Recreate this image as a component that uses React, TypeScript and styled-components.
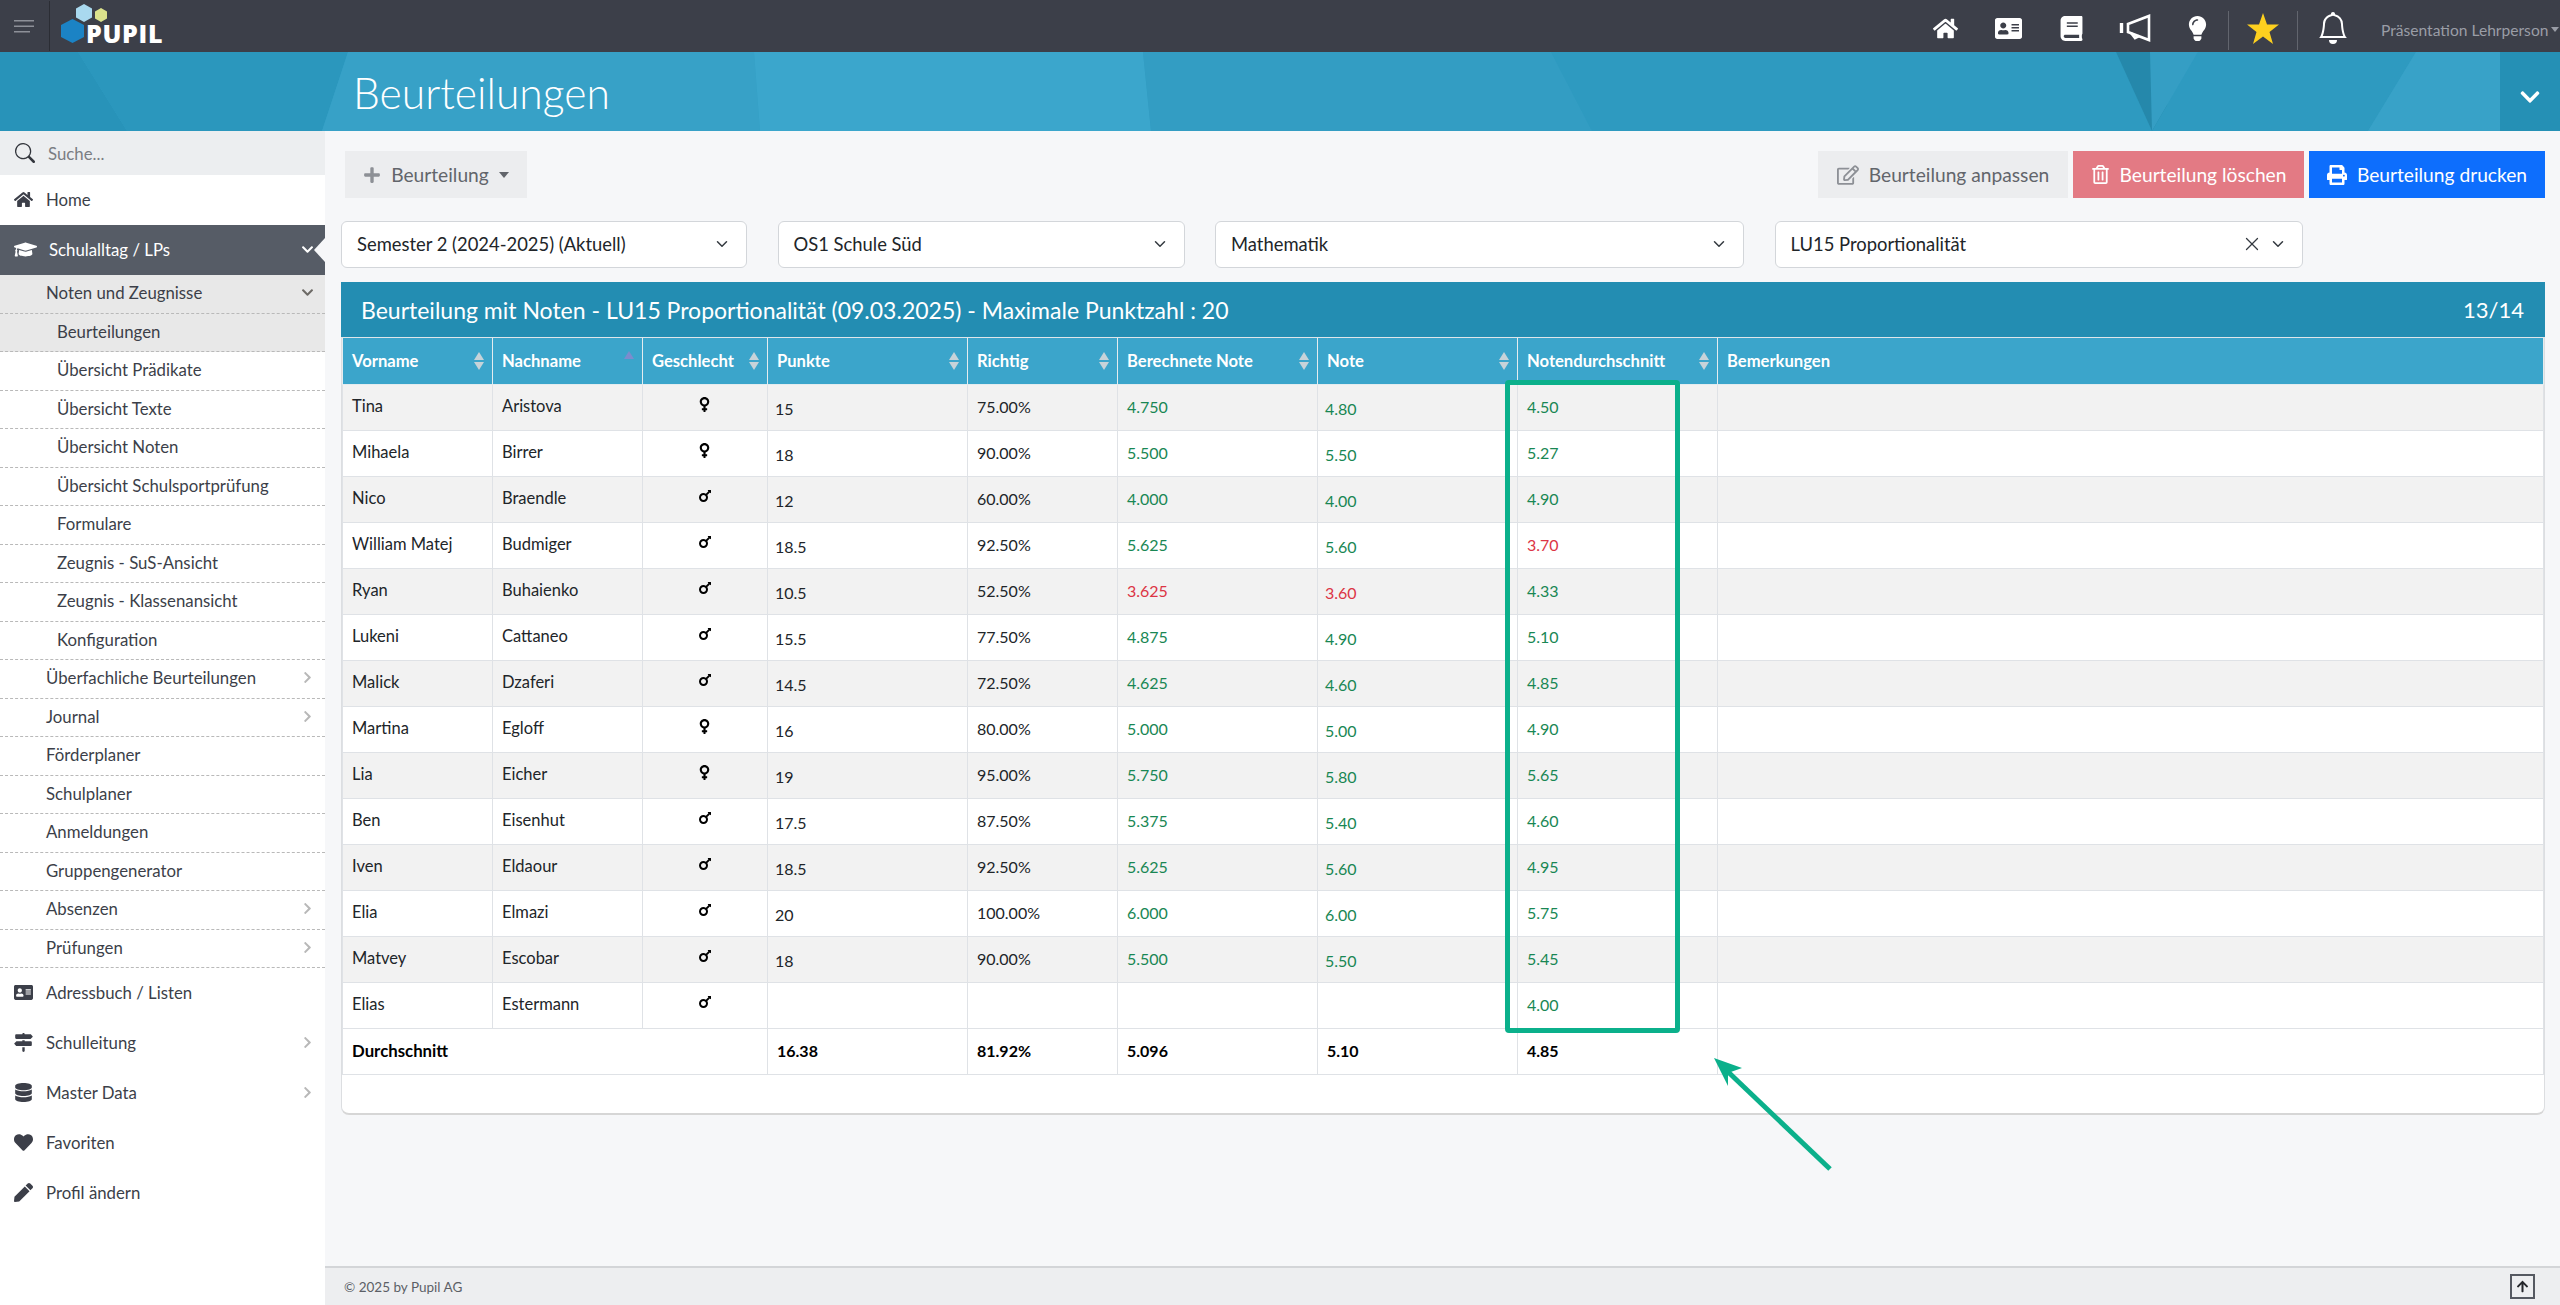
import React from "react";
import styled, { createGlobalStyle } from "styled-components";
import {
  FaHome,
  FaAddressCard,
  FaBook,
  FaLightbulb,
  FaGraduationCap,
  FaDatabase,
  FaHeart,
  FaPen,
  FaPlus,
  FaRegEdit,
  FaRegTrashAlt,
  FaPrint,
  FaVenus,
  FaMars,
  FaChevronDown,
  FaChevronRight,
  FaArrowUp,
} from "react-icons/fa";
import { FaSignsPost } from "react-icons/fa6";
import { BsSearch, BsBell } from "react-icons/bs";
import { ChevronDown, X } from "lucide-react";

const GlobalStyle = createGlobalStyle`
  * { box-sizing: border-box; }
  html, body { margin: 0; padding: 0; }
  body {
    font-family: "Lato", "Noto Sans", sans-serif;
    color: #212529;
    background: #f6f7f9;
  }
`;

const Page = styled.div`
  position: relative;
  width: 2560px;
  height: 1305px;
  display: flex;
  flex-direction: column;
  overflow: hidden;
`;

const TopBar = styled.header`
  height: 52px;
  background: #3c3f49;
  display: flex;
  align-items: center;
  flex-shrink: 0;
`;

const MenuButton = styled.div`
  width: 50px;
  height: 50px;
  border-right: 1px solid #2b2d34;
  display: flex;
  align-items: center;
  justify-content: center;
  padding-right: 2px;
`;

const LogoWrap = styled.div`
  display: flex;
  position: relative;
  width: 120px;
  height: 52px;
  margin-left: 10px;
`;

const LogoText = styled.span`
  position: absolute;
  left: 26px;
  top: 19px;
  font-family: "Open Sans", sans-serif;
  font-weight: 800;
  font-size: 25px;
  line-height: 28px;
  letter-spacing: 0.7px;
  color: #fff;
`;

const TopIcons = styled.nav`
  margin-left: auto;
  display: flex;
  align-items: center;
  height: 100%;
  padding-top: 4px;
`;

const TopIcon = styled.div<{ $size?: number }>`
  width: 63px;
  height: 48px;
  display: flex;
  align-items: center;
  justify-content: center;
  color: #fff;
  font-size: ${(p) => p.$size ?? 24}px;
`;

const StarBox = styled.div`
  width: 70px;
  height: 39px;
  border-left: 1px solid #62656e;
  border-right: 1px solid #62656e;
  display: flex;
  align-items: center;
  justify-content: center;
  margin: 4px 0 0 -1px;
`;

const StarShape = styled.svg`
  margin-top: -4px;
`;

const BellBox = styled.div`
  width: 70px;
  display: flex;
  align-items: center;
  justify-content: center;
  color: #fff;
  font-size: 32px;
`;

const UserMenu = styled.div`
  width: 192px;
  padding: 3px 0 0 13px;
  font-size: 15.6px;
  color: #9a9da6;
  display: flex;
  align-items: center;
  gap: 3px;
  white-space: nowrap;
`;

const Caret = styled.span`
  display: inline-block;
  width: 0;
  height: 0;
  border-left: 0.29em solid transparent;
  border-right: 0.29em solid transparent;
  border-top: 0.33em solid currentColor;
`;

const Banner = styled.div`
  position: relative;
  height: 79px;
  background: #339dc3;
  flex-shrink: 0;
  display: flex;
  align-items: center;
  padding: 3px 0 0 353px;
`;

const BannerArt = styled.svg`
  position: absolute;
  inset: 0;
  width: 100%;
  height: 100%;
`;

const PageTitle = styled.h1`
  position: relative;
  margin: 0;
  font-weight: 300;
  font-size: 42.6px;
  line-height: 52px;
  color: #fff;
`;

const CollapseTab = styled.div`
  position: absolute;
  right: 0;
  top: 0;
  width: 60px;
  height: 79px;
  background: #2590b5;
  color: #fff;
  display: flex;
  align-items: center;
  justify-content: center;
  padding-top: 10px;
  font-size: 22px;
`;

const Body = styled.div`
  flex: 1;
  display: flex;
  min-height: 0;
`;

const Sidebar = styled.aside`
  width: 325px;
  background: #fff;
  flex-shrink: 0;
  color: #3c3f49;
`;

const SearchRow = styled.div`
  height: 44px;
  background: #eceef0;
  display: flex;
  align-items: center;
  padding-left: 15px;
  gap: 13px;
  color: #33363d;
  font-size: 20px;
`;

const SearchHint = styled.span`
  font-size: 16.8px;
  color: #7a7d83;
`;

const MainItem = styled.div<{ $active?: boolean }>`
  position: relative;
  height: 50px;
  display: flex;
  align-items: center;
  padding: 0 11px 2px 14px;
  font-size: 16.8px;
  background: ${(p) => (p.$active ? "#565c66" : "#fff")};
  color: ${(p) => (p.$active ? "#fff" : "#3c3f49")};
`;

const ItemIcon = styled.span<{ $wide?: boolean }>`
  width: ${(p) => (p.$wide ? 35 : 32)}px;
  display: flex;
  align-items: center;
  font-size: ${(p) => (p.$wide ? 23 : 19)}px;
  color: ${(p) => (p.$wide ? "#fff" : "#3c3f49")};
`;

const Notch = styled.span`
  position: absolute;
  right: 0;
  top: 13px;
  width: 0;
  height: 0;
  border-top: 12px solid transparent;
  border-bottom: 12px solid transparent;
  border-right: 11px solid #f6f7f9;
`;

const SubItem = styled.div<{ $level: number; $shaded?: boolean }>`
  height: 38.5px;
  display: flex;
  align-items: center;
  padding: 0 11px 2px ${(p) => (p.$level === 2 ? 57 : 46)}px;
  font-size: 16.8px;
  border-bottom: 1px dashed #b9b9b9;
  background: ${(p) => (p.$shaded ? "#e8e8e8" : "#fff")};
  color: #3c3f49;
`;

const Chevron = styled.span<{ $color?: string }>`
  margin-left: auto;
  display: flex;
  font-size: 13px;
  color: ${(p) => p.$color ?? "#b8b8b8"};
`;

const Main = styled.main`
  flex: 1;
  min-width: 0;
  display: flex;
  flex-direction: column;
`;

const Content = styled.div`
  flex: 1;
  padding: 20px 15px 0 16px;
`;

const Toolbar = styled.div`
  display: flex;
  align-items: stretch;
  height: 47px;
  gap: 5px;
  padding-left: 4px;
`;

const ActionButton = styled.div<{ $bg: string; $color: string; $w: number }>`
  width: ${(p) => p.$w}px;
  background: ${(p) => p.$bg};
  color: ${(p) => p.$color};
  display: flex;
  align-items: center;
  justify-content: center;
  gap: 10px;
  font-size: 19.2px;
  white-space: nowrap;
`;

const PushRight = styled.div`
  margin-left: auto;
`;

const FilterRow = styled.div`
  display: grid;
  grid-template-columns: 406px 407px 529px 528px;
  column-gap: 30.5px;
  margin-top: 23px;
`;

const Select = styled.div`
  height: 47px;
  background: #fff;
  border: 1.5px solid #d3d6da;
  border-radius: 6px;
  display: flex;
  align-items: center;
  padding: 0 15px 2px;
  font-size: 18.4px;
  color: #212529;
`;

const SelectIcons = styled.span`
  margin-left: auto;
  display: flex;
  align-items: center;
  gap: 6px;
  color: #343a40;
`;

const Card = styled.section`
  margin-top: 14px;
  height: 833px;
  background: #fff;
  border: 1px solid #dcdee1;
  border-top: 0;
  border-bottom: 2px solid #d6d6d6;
  border-radius: 0 0 8px 8px;
`;

const CardHead = styled.div`
  height: 56px;
  margin: 0 -1px;
  background: #238db2;
  color: #fff;
  display: flex;
  align-items: center;
  justify-content: space-between;
  padding: 0 21px 0 20px;
  font-size: 23px;
  border-bottom: 1px solid #dfe6ea;
`;

const Pager = styled.span`
  font-size: 22px;
`;

const Table = styled.table`
  width: 100%;
  table-layout: fixed;
  border-collapse: collapse;
`;

const Th = styled.th`
  height: 46px;
  background: #3ba5cb;
  border: 1px solid #e4ecef;
  border-top: 0;
  color: #fff;
  font-weight: 700;
  font-size: 16.6px;
  text-align: left;
  padding: 0 10px 0 9px;
  white-space: nowrap;
`;

const ThInner = styled.div`
  display: flex;
  align-items: center;
  justify-content: space-between;
`;

const SortArrows = styled.span`
  display: flex;
  flex-direction: column;
  gap: 2px;
  margin-right: -2px;
`;

const SortSpacer = styled.span`
  height: 10px;
`;

const Tri = styled.span<{ $dir: "up" | "down"; $color?: string }>`
  width: 0;
  height: 0;
  border-left: 5.5px solid transparent;
  border-right: 5.5px solid transparent;
  ${(p) =>
    p.$dir === "up"
      ? `border-bottom: 8px solid ${p.$color ?? "#c6d3d9"};`
      : `border-top: 8px solid ${p.$color ?? "#c6d3d9"};`}
`;

const Tr = styled.tr<{ $odd?: boolean }>`
  background: ${(p) => (p.$odd ? "#f2f2f2" : "#fff")};
`;

const Td = styled.td<{ $center?: boolean; $color?: string; $offset?: boolean; $bold?: boolean; $num?: boolean }>`
  height: 46px;
  border: 1px solid #dfe2e6;
  padding: ${(p) => (p.$offset ? "2px 10px 0 7px" : "0 10px 2px 9px")};
  text-align: ${(p) => (p.$center ? "center" : "left")};
  color: ${(p) => p.$color ?? (p.$bold ? "#000" : "#212529")};
  font-weight: ${(p) => (p.$bold ? 700 : 400)};
  font-size: ${(p) => (p.$num ? 16 : p.$bold ? 16.8 : 16.5)}px;
`;

const FooterBar = styled.footer`
  height: 39px;
  background: #edeef0;
  border-top: 2px solid #d3d5d8;
  display: flex;
  align-items: center;
  justify-content: space-between;
  padding: 0 25px 0 19px;
  font-size: 13.5px;
  color: #5c5f66;
`;

const ToTop = styled.div`
  width: 25px;
  height: 25px;
  border: 2px solid #555961;
  display: flex;
  align-items: center;
  justify-content: center;
  color: #24262b;
  font-size: 13px;
`;

const Highlight = styled.div`
  position: absolute;
  left: 1505px;
  top: 380px;
  width: 175px;
  height: 653px;
  border: 5px solid #0bb08b;
  border-radius: 4px;
`;

const ArrowMark = styled.svg`
  position: absolute;
  left: 1700px;
  top: 1045px;
`;

type Row = [string, string, "f" | "m", string, string, string, string, string];

const rows: Row[] = [
  ["Tina", "Aristova", "f", "15", "75.00%", "4.750", "4.80", "4.50"],
  ["Mihaela", "Birrer", "f", "18", "90.00%", "5.500", "5.50", "5.27"],
  ["Nico", "Braendle", "m", "12", "60.00%", "4.000", "4.00", "4.90"],
  ["William Matej", "Budmiger", "m", "18.5", "92.50%", "5.625", "5.60", "3.70"],
  ["Ryan", "Buhaienko", "m", "10.5", "52.50%", "3.625", "3.60", "4.33"],
  ["Lukeni", "Cattaneo", "m", "15.5", "77.50%", "4.875", "4.90", "5.10"],
  ["Malick", "Dzaferi", "m", "14.5", "72.50%", "4.625", "4.60", "4.85"],
  ["Martina", "Egloff", "f", "16", "80.00%", "5.000", "5.00", "4.90"],
  ["Lia", "Eicher", "f", "19", "95.00%", "5.750", "5.80", "5.65"],
  ["Ben", "Eisenhut", "m", "17.5", "87.50%", "5.375", "5.40", "4.60"],
  ["Iven", "Eldaour", "m", "18.5", "92.50%", "5.625", "5.60", "4.95"],
  ["Elia", "Elmazi", "m", "20", "100.00%", "6.000", "6.00", "5.75"],
  ["Matvey", "Escobar", "m", "18", "90.00%", "5.500", "5.50", "5.45"],
  ["Elias", "Estermann", "m", "", "", "", "", "4.00"],
];

const gradeColor = (v: string) => (parseFloat(v) < 4 ? "#dc3545" : "#198754");

const columns: [string, number | undefined, boolean][] = [
  ["Vorname", 150, true],
  ["Nachname", 150, true],
  ["Geschlecht", 125, true],
  ["Punkte", 200, true],
  ["Richtig", 150, true],
  ["Berechnete Note", 200, true],
  ["Note", 200, true],
  ["Notendurchschnitt", 200, true],
  ["Bemerkungen", undefined, false],
];

const subMenu = [
  "Beurteilungen",
  "Übersicht Prädikate",
  "Übersicht Texte",
  "Übersicht Noten",
  "Übersicht Schulsportprüfung",
  "Formulare",
  "Zeugnis - SuS-Ansicht",
  "Zeugnis - Klassenansicht",
  "Konfiguration",
];

const schoolMenu: [string, boolean][] = [
  ["Überfachliche Beurteilungen", true],
  ["Journal", true],
  ["Förderplaner", false],
  ["Schulplaner", false],
  ["Anmeldungen", false],
  ["Gruppengenerator", false],
  ["Absenzen", true],
  ["Prüfungen", true],
];

const Hamburger = () => (
  <svg width="20" height="13" viewBox="0 0 20 13">
    <rect x="0" y="0" width="20" height="1.5" fill="#8d9098" />
    <rect x="0" y="5.5" width="20" height="1.5" fill="#8d9098" />
    <rect x="0" y="11" width="16" height="1.5" fill="#8d9098" />
  </svg>
);

const Logo = () => (
  <LogoWrap>
    <svg width="60" height="46" viewBox="0 0 60 46">
      <polygon points="12.5,19 24,25 24,37 12.5,43 1,37 1,25" fill="#1b83c5" />
      <polygon points="24,4 32,8.5 32,17.5 24,22 16,17.5 16,8.5" fill="#a9d9ef" />
      <polygon points="41,8 47,11.5 47,18.5 41,22 35,18.5 35,11.5" fill="#dbe28c" />
    </svg>
    <LogoText>PUPIL</LogoText>
  </LogoWrap>
);

const Megaphone = () => (
  <svg width="32" height="28" viewBox="0 0 32 28" fill="none" stroke="#fff" strokeWidth="2.6">
    <path d="M9 10 L30 2 V26 L9 18 Z" />
    <path d="M2.5 9 V19" strokeWidth="3.4" />
    <path d="M12 19 L16 24 L20 22" />
  </svg>
);

const Star = () => (
  <StarShape width="32" height="31" viewBox="0 0 32 31">
    <polygon points="16,0 20,11.5 32,11.5 22.5,19 26,31 16,23.5 6,31 9.5,19 0,11.5 12,11.5" fill="#fdd01f" />
  </StarShape>
);

const Sort = ({ active }: { active: boolean }) =>
  active ? (
    <SortArrows>
      <Tri $dir="up" $color="#7c8ccd" />
      <SortSpacer />
    </SortArrows>
  ) : (
    <SortArrows>
      <Tri $dir="up" />
      <Tri $dir="down" />
    </SortArrows>
  );

export default function App() {
  return (
    <Page>
      <GlobalStyle />
      <TopBar>
        <MenuButton>
          <Hamburger />
        </MenuButton>
        <Logo />
        <TopIcons>
          <TopIcon $size={25}><FaHome /></TopIcon>
          <TopIcon $size={27}><FaAddressCard /></TopIcon>
          <TopIcon $size={25}><FaBook /></TopIcon>
          <TopIcon><Megaphone /></TopIcon>
          <TopIcon $size={25}><FaLightbulb /></TopIcon>
          <StarBox><Star /></StarBox>
          <BellBox><BsBell /></BellBox>
          <UserMenu>
            Präsentation Lehrperson
            <Caret />
          </UserMenu>
        </TopIcons>
      </TopBar>

      <Banner>
        <BannerArt viewBox="0 0 2560 79" preserveAspectRatio="none">
          <polygon points="0,0 78,0 127,79 0,79" fill="#2893b9" />
          <polygon points="78,0 348,0 322,79 127,79" fill="#2b97bd" />
          <polygon points="348,0 754,0 760,79 322,79" fill="#37a1c7" />
          <polygon points="754,0 1143,0 1151,79 760,79" fill="#3ba6cc" />
          <polygon points="1143,0 1551,0 1592,79 1151,79" fill="#339dc3" />
          <polygon points="1551,0 2116,0 2152,79 1592,79" fill="#2e9ac0" />
          <polygon points="2116,0 2150,0 2176,79 2152,79" fill="#2588ab" />
          <polygon points="2150,0 2198,0 2152,79" fill="#359ec4" />
          <polygon points="2198,0 2416,0 2368,79 2176,79 2152,79" fill="#2e9ac0" />
          <polygon points="2416,0 2500,0 2500,79 2368,79" fill="#38a2c8" />
        </BannerArt>
        <PageTitle>Beurteilungen</PageTitle>
        <CollapseTab><FaChevronDown /></CollapseTab>
      </Banner>

      <Body>
        <Sidebar>
          <SearchRow>
            <BsSearch />
            <SearchHint>Suche...</SearchHint>
          </SearchRow>
          <MainItem>
            <ItemIcon><FaHome /></ItemIcon>
            Home
          </MainItem>
          <MainItem $active>
            <ItemIcon $wide><FaGraduationCap /></ItemIcon>
            Schulalltag / LPs
            <Chevron $color="#fff"><FaChevronDown /></Chevron>
            <Notch />
          </MainItem>
          <SubItem $level={1} $shaded>
            Noten und Zeugnisse
            <Chevron $color="#6d6a66"><FaChevronDown /></Chevron>
          </SubItem>
          {subMenu.map((label, i) => (
            <SubItem key={label} $level={2} $shaded={i === 0}>
              {label}
            </SubItem>
          ))}
          {schoolMenu.map(([label, more]) => (
            <SubItem key={label} $level={1}>
              {label}
              {more && <Chevron><FaChevronRight /></Chevron>}
            </SubItem>
          ))}
          <MainItem>
            <ItemIcon><FaAddressCard /></ItemIcon>
            Adressbuch / Listen
          </MainItem>
          <MainItem>
            <ItemIcon><FaSignsPost /></ItemIcon>
            Schulleitung
            <Chevron><FaChevronRight /></Chevron>
          </MainItem>
          <MainItem>
            <ItemIcon><FaDatabase /></ItemIcon>
            Master Data
            <Chevron><FaChevronRight /></Chevron>
          </MainItem>
          <MainItem>
            <ItemIcon><FaHeart /></ItemIcon>
            Favoriten
          </MainItem>
          <MainItem>
            <ItemIcon><FaPen /></ItemIcon>
            Profil ändern
          </MainItem>
        </Sidebar>

        <Main>
          <Content>
            <Toolbar>
              <ActionButton $bg="#ecedef" $color="#62656b" $w={182}>
                <FaPlus color="#8d9096" size={18} />
                Beurteilung
                <Caret />
              </ActionButton>
              <PushRight />
              <ActionButton $bg="#ecedef" $color="#62656b" $w={250}>
                <FaRegEdit color="#8d9096" size={22} />
                Beurteilung anpassen
              </ActionButton>
              <ActionButton $bg="#e37a84" $color="#fff" $w={231}>
                <FaRegTrashAlt size={19} />
                Beurteilung löschen
              </ActionButton>
              <ActionButton $bg="#0d6efd" $color="#fff" $w={236}>
                <FaPrint size={20} />
                Beurteilung drucken
              </ActionButton>
            </Toolbar>

            <FilterRow>
              <Select>
                Semester 2 (2024-2025) (Aktuell)
                <SelectIcons><ChevronDown size={18} /></SelectIcons>
              </Select>
              <Select>
                OS1 Schule Süd
                <SelectIcons><ChevronDown size={18} /></SelectIcons>
              </Select>
              <Select>
                Mathematik
                <SelectIcons><ChevronDown size={18} /></SelectIcons>
              </Select>
              <Select>
                LU15 Proportionalität
                <SelectIcons>
                  <X size={22} strokeWidth={1.4} />
                  <ChevronDown size={18} />
                </SelectIcons>
              </Select>
            </FilterRow>

            <Card>
              <CardHead>
                <span>Beurteilung mit Noten - LU15 Proportionalität (09.03.2025) - Maximale Punktzahl : 20</span>
                <Pager>13/14</Pager>
              </CardHead>
              <Table>
                <colgroup>
                  {columns.map(([name, w]) => (
                    <col key={name} width={w} />
                  ))}
                </colgroup>
                <thead>
                  <tr>
                    {columns.map(([name, , sortable]) => (
                      <Th key={name}>
                        <ThInner>
                          {name}
                          {sortable && <Sort active={name === "Nachname"} />}
                        </ThInner>
                      </Th>
                    ))}
                  </tr>
                </thead>
                <tbody>
                  {rows.map((r, i) => (
                    <Tr key={r[0]} $odd={i % 2 === 0}>
                      <Td>{r[0]}</Td>
                      <Td>{r[1]}</Td>
                      <Td $center>{r[2] === "f" ? <FaVenus color="#000" size={17} /> : <FaMars color="#000" size={16} />}</Td>
                      <Td $offset $num>{r[3]}</Td>
                      <Td $num>{r[4]}</Td>
                      <Td $num $color={gradeColor(r[5])}>{r[5]}</Td>
                      <Td $offset $num $color={gradeColor(r[6])}>{r[6]}</Td>
                      <Td $num $color={gradeColor(r[7])}>{r[7]}</Td>
                      <Td />
                    </Tr>
                  ))}
                  <Tr>
                    <Td colSpan={3} $bold>Durchschnitt</Td>
                    <Td $bold $num>16.38</Td>
                    <Td $bold $num>81.92%</Td>
                    <Td $bold $num>5.096</Td>
                    <Td $bold $num>5.10</Td>
                    <Td $bold $num>4.85</Td>
                    <Td />
                  </Tr>
                </tbody>
              </Table>
            </Card>
          </Content>
          <FooterBar>
            © 2025 by Pupil AG
            <ToTop><FaArrowUp /></ToTop>
          </FooterBar>
        </Main>
      </Body>

      <Highlight />
      <ArrowMark width="140" height="135" viewBox="0 0 140 135">
        <line x1="130" y1="124" x2="24" y2="23" stroke="#0bb08b" strokeWidth="5" />
        <polygon points="14,13 42,23 28,28 28,41" fill="#0bb08b" />
      </ArrowMark>
    </Page>
  );
}
